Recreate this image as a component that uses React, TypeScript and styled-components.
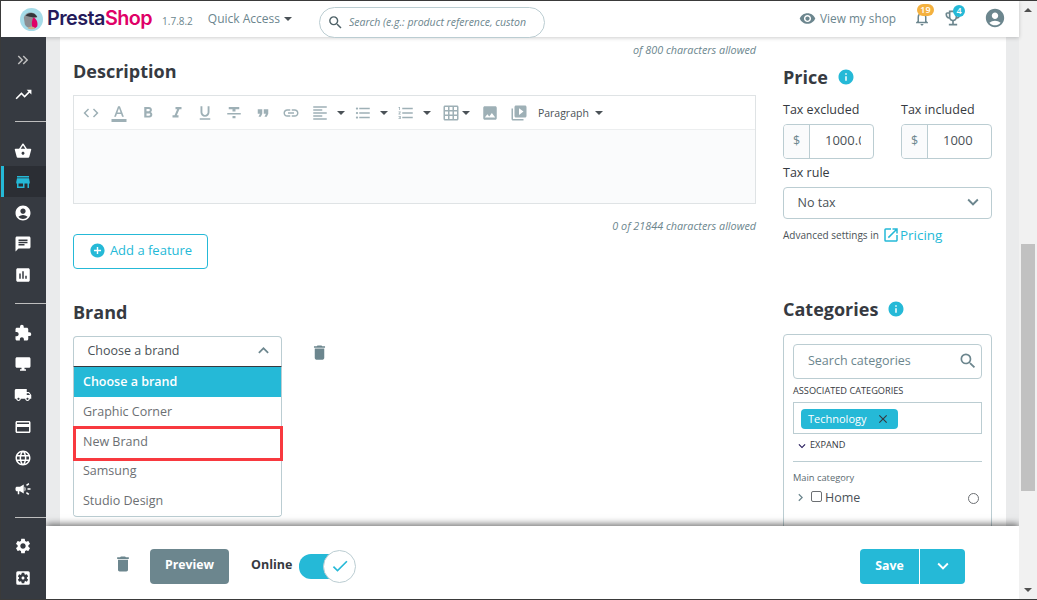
import React from "react";
import styled, { createGlobalStyle } from "styled-components";
import {
  MdKeyboardDoubleArrowRight, MdTrendingUp, MdShoppingBasket, MdStore, MdAccountCircle, MdChat, MdAssessment,
  MdExtension, MdDesktopWindows, MdLocalShipping, MdCreditCard, MdLanguage, MdCampaign, MdSettings, MdSettingsApplications,
  MdVisibility, MdNotificationsNone, MdOutlineEmojiEvents, MdSearch, MdCode, MdFormatColorText, MdFormatBold, MdFormatItalic,
  MdFormatUnderlined, MdFormatStrikethrough, MdFormatQuote, MdLink, MdFormatAlignLeft, MdFormatListBulleted, MdFormatListNumbered,
  MdGridOn, MdImage, MdVideoLibrary, MdAddCircle, MdExpandLess, MdExpandMore, MdDelete, MdInfo, MdOpenInNew, MdClose,
  MdChevronRight, MdCheck, MdKeyboardArrowDown,
} from "react-icons/md";

const Global = createGlobalStyle`
  html, body { margin: 0; padding: 0; height: 100%; overflow: hidden; background: #fff; }
  * { box-sizing: border-box; }
  body { font-family: "Open Sans", "Liberation Sans", sans-serif; color: #363a41; }
`;

const Frame = styled.div`
  width: 1037px; height: 600px; display: flex; overflow: hidden;
  border-top: 1px solid #3a3a3a; border-bottom: 1px solid #3a3a3a; border-left: 1px solid #3a3a3a;
`;
const Page = styled.div`width: 1018px; display: flex; flex-direction: column; min-width: 0;`;
const Header = styled.header`
  position: relative; z-index: 3; height: 36px; flex: none; background: #fff; display: flex; align-items: center;
  padding-left: 19px; box-shadow: 0 1px 4px rgba(0,0,0,.2);
`;
const LogoMark = styled.svg`width: 23px; height: 23px; flex: none;`;
const LogoText = styled.span`font-family: Inter, sans-serif; font-size: 19.8px; font-weight: 600; letter-spacing: -0.55px; margin-left: 4px; color: #251b5b; line-height: 1;`;
const LogoAccent = styled.span`color: #df0067;`;
const Version = styled.span`font-size: 10px; color: #6c868e; margin-left: 10px; margin-top: 3px;`;
const QuickAccess = styled.span`font-size: 12px; color: #6c868e; margin-left: 15px; display: flex; align-items: center; gap: 4px; margin-top: -1px;`;
const Caret = styled.i<{ $gap?: number }>`
  display: block; width: 0; height: 0; flex: none; margin-left: ${(p) => p.$gap ?? 0}px;
  border-left: 4px solid transparent; border-right: 4px solid transparent; border-top: 4px solid #4b5257;
`;
const SearchPill = styled.div`
  width: 226px; height: 31px; margin-left: 27px; margin-top: 6px; border: 1px solid #bbcdd2; border-radius: 16px; display: flex; align-items: center;
  padding: 0 13px 0 7px; gap: 4px; color: #4e6167; overflow: hidden; white-space: nowrap;
`;
const SearchHint = styled.span`font-size: 10.5px; font-style: italic; color: #6c868e; overflow: hidden; margin-left: 1px;`;
const HeaderRight = styled.div`margin-left: auto; display: flex; align-items: center; height: 100%; margin-top: -2px;`;
const ViewShop = styled.span`display: flex; align-items: center; gap: 4px; font-size: 11.8px; color: #6c868e;`;
const Notify = styled.span<{ $left: number }>`position: relative; display: flex; margin-left: ${(p) => p.$left}px; color: #6c868e;`;
const Badge = styled.b<{ $bg: string; $w: number; $x: number; $y: number }>`
  position: absolute; left: ${(p) => p.$x}px; top: ${(p) => p.$y}px; width: ${(p) => p.$w}px; height: 12px; border-radius: 6px; background: ${(p) => p.$bg};
  color: #fff; font-size: 9px; font-weight: 600; line-height: 12px; text-align: center;
`;
const Account = styled.span`display: flex; margin-left: 21px; margin-right: 13px; color: #6c868e;`;

const Body = styled.div`flex: 1; display: flex; min-height: 0; overflow: hidden;`;
const Sidebar = styled.nav`width: 45px; flex: none; background: #363a41; padding-top: 5px; display: flex; flex-direction: column; overflow: hidden; position: relative; z-index: 3;`;
const NavItem = styled.span<{ $active?: boolean; $h?: number; $muted?: boolean }>`
  height: ${(p) => p.$h ?? 31}px; flex: none; display: flex; align-items: center; justify-content: center; padding-right: 4px;
  color: ${(p) => (p.$active ? "#25b9d7" : p.$muted ? "#bebebe" : "#fff")};
  background: ${(p) => (p.$active ? "#2b2e34" : "transparent")};
  border-left: 3px solid ${(p) => (p.$active ? "#25b9d7" : "transparent")};
`;
const NavRule = styled.hr<{ $top: number; $bottom: number }>`
  margin: ${(p) => p.$top}px 0 ${(p) => p.$bottom}px 14px; height: 1px; border: 0; background: #bebebe; flex: none;
`;

const Main = styled.div`flex: 1; display: flex; flex-direction: column; min-width: 0; background: #eaebec;`;
const Scroller = styled.div`flex: 1; min-height: 0; overflow: hidden; padding: 0 13px 0 14px;`;
const Card = styled.main`
  background: #fff; display: grid; grid-template-columns: 683px 209px; column-gap: 27px; padding: 5px 14px 40px 13px; min-height: 600px;
`;
const Column = styled.section`display: flex; flex-direction: column; min-width: 0;`;
const RightColumn = styled(Column)`padding-top: 23px;`;
const Counter = styled.div<{ $top?: number }>`height: 16px; margin-top: ${(p) => p.$top ?? 0}px; text-align: right; font-size: 10.8px; line-height: 16px; font-style: italic; color: #6c868e;`;
const Heading = styled.h2<{ $top?: number; $bottom?: number }>`
  margin: ${(p) => p.$top ?? 0}px 0 ${(p) => p.$bottom ?? 12}px; height: 24px; font-size: 18px; line-height: 24px; font-weight: 700; color: #363a41; display: flex; align-items: center; gap: 9px;
`;
const InfoDot = styled.span`display: flex; color: #25b9d7;`;
const Editor = styled.div`height: 109px; border: 1px solid #dfe3e5; display: flex; flex-direction: column;`;
const Toolbar = styled.div`height: 34px; flex: none; padding-left: 2px; display: flex; align-items: center; border-bottom: 1px solid #eceeef; color: #9eb0b6;`;
const ToolButton = styled.span<{ $w?: number; $pad?: number }>`
  width: ${(p) => p.$w ?? 28.7}px; height: 100%; flex: none; display: flex; align-items: center; padding-left: ${(p) => p.$pad ?? 5.5}px;
`;
const ParagraphPick = styled.span`margin-left: 5px; font-size: 10.5px; color: #4b5257; display: flex; align-items: center; gap: 6px;`;
const EditorBody = styled.div`flex: 1; background: #fafbfc;`;
const AddButton = styled.button`
  width: 135px; height: 35px; flex: none; background: #fff; border: 1px solid #25b9d7; border-radius: 4px; color: #25b9d7; font: 13px "Open Sans", sans-serif;
  display: flex; align-items: center; justify-content: center; gap: 4px; padding: 0 0 3px;
`;
const BrandRow = styled.div`display: flex; align-items: flex-start;`;
const SelectWrap = styled.div`position: relative; width: 209px; flex: none;`;
const SelectBox = styled.div<{ $open?: boolean; $h?: number }>`
  height: ${(p) => p.$h ?? 31}px; background: #fff; border: 1px solid #bbcdd2; border-radius: ${(p) => (p.$open ? "4px 4px 0 0" : "4px")};
  ${(p) => (p.$open ? "border-bottom-color: #363a41;" : "")}
  display: flex; align-items: center; justify-content: space-between; padding: 0 7px 2px 13.5px; font-size: 12.5px; color: #4b5257;
`;
const SelectIcon = styled.span`display: flex; color: #6c868e;`;
const Menu = styled.ul`
  position: absolute; left: 0; right: 0; top: 100%; margin: 0; padding: 0; list-style: none; background: #fff;
  border: 1px solid #bbcdd2; border-top: 0; border-radius: 0 0 4px 4px; height: 150px;
`;
const MenuItem = styled.li<{ $selected?: boolean }>`
  height: ${(p) => (p.$selected ? 30 : 29.5)}px; padding: 0 9px; font-size: 12.5px; line-height: ${(p) => (p.$selected ? 29 : 29.2)}px;
  background: ${(p) => (p.$selected ? "#25b9d7" : "#fff")}; color: ${(p) => (p.$selected ? "#fff" : "#6c6f73")}; font-weight: ${(p) => (p.$selected ? 600 : 400)};
`;
const Highlight = styled.div`position: absolute; left: -1px; top: 59px; width: 210px; height: 35px; border: 3px solid #f8393f; pointer-events: none;`;
const BrandTrash = styled.span`margin: 7px 0 0 28px; display: flex; color: #6c868e;`;

const PriceGrid = styled.div`display: grid; grid-template-columns: 91px 91px; column-gap: 27px;`;
const FieldLabel = styled.label<{ $top?: number }>`display: block; height: 18px; margin: ${(p) => p.$top ?? 0}px 0 6px; font-size: 12.5px; line-height: 19px; color: #363a41;`;
const PriceLabel = styled(FieldLabel)`margin: -1px 0 6px;`;
const PriceInput = styled.div`height: 35px; border: 1px solid #bbcdd2; border-radius: 4px; display: flex; overflow: hidden;`;
const Addon = styled.span`width: 26px; flex: none; background: #fafbfc; border-right: 1px solid #bbcdd2; color: #6c868e; font-size: 12.5px; display: flex; align-items: center; justify-content: center; padding-bottom: 2px;`;
const Amount = styled.span`flex: 1; min-width: 0; overflow: hidden; white-space: nowrap; margin: 0 12px 0 15px; font-size: 13px; line-height: 30px; color: #4b5257;`;
const AdvancedRow = styled.div`margin-top: 7px; height: 18px; display: flex; align-items: center; font-size: 10px; color: #4b5257;`;
const PricingLink = styled.span`display: flex; align-items: center; margin-left: 3px; color: #25b9d7; font-size: 13.5px; font-weight: 500;`;
const CategoryBox = styled.div`border: 1px solid #bbcdd2; border-radius: 4px 4px 0 0; height: 240px; padding: 9px 9px 0 9px; display: flex; flex-direction: column;`;
const CategorySearch = styled.div`height: 35px; flex: none; border: 1px solid #bbcdd2; border-radius: 4px; display: flex; align-items: center; justify-content: space-between; padding: 0 3px 2px 14px; font-size: 12.5px; color: #6c868e;`;
const SmallCaps = styled.div`height: 14px; margin-top: 5px; font-size: 9.2px; line-height: 14px; color: #363a41; font-weight: 500; white-space: nowrap;`;
const TagBox = styled.div`height: 32px; margin-top: 4px; flex: none; border: 1px solid #bbcdd2; padding: 6px 7px;`;
const Tag = styled.span`height: 20px; width: 97px; border-radius: 4px; background: #25b9d7; color: #fff; font-size: 11px; display: flex; align-items: center; justify-content: space-between; padding: 0 8px 1px 7px;`;
const ExpandRow = styled.div`margin-top: 3px; height: 15px; display: flex; align-items: center; font-size: 9.2px; color: #363a41; padding-left: 2px; gap: 1px;`;
const ExpandIcon = styled.span`display: flex; color: #251b5b; margin-top: 2px;`;
const BoxRule = styled.hr`height: 1px; border: 0; background: #bbcdd2; margin: 9px 0 0; flex: none;`;
const MainCat = styled.div`margin-top: 9px; height: 14px; font-size: 9.3px; line-height: 14px; color: #5b6a70;`;
const TreeRow = styled.div`margin-top: 2px; height: 20px; display: flex; align-items: center; font-size: 12.5px; color: #4b5257;`;
const TreeChevron = styled.span`display: flex; color: #6c868e; width: 18px; flex: none;`;
const Check = styled.span`width: 11px; height: 11px; border: 1px solid #6c6f73; border-radius: 2px; flex: none; margin-right: 3px; margin-top: -1px;`;
const Radio = styled.span`width: 11px; height: 11px; border: 1px solid #6c6f73; border-radius: 50%; flex: none; margin-left: auto; margin-right: 3px; margin-top: 2px;`;

const Footer = styled.footer`
  position: relative; z-index: 2; height: 73px; flex: none; background: #fff; box-shadow: 0 -2px 7px rgba(0,0,0,.55); display: flex; align-items: center; padding: 7px 54px 0 67px;
`;
const FooterTrash = styled.span`display: flex; color: #6c868e; margin: 0 17px 5px 0;`;
const PreviewButton = styled.button`
  width: 79px; height: 35px; border: 0; border-radius: 4px; background: #6c868e; color: #fff; font: 700 12.3px "Open Sans", sans-serif; padding: 0 0 4px;
`;
const OnlineLabel = styled.span`margin-left: 22px; font-size: 12.5px; font-weight: 700; color: #363a41; padding-bottom: 4px;`;
const Switch = styled.span`position: relative; width: 57px; height: 33px; margin-left: 7px; display: flex; align-items: center;`;
const Track = styled.span`width: 42px; height: 25px; border-radius: 12px 0 0 12px; background: #25b9d7; display: block;`;
const Knob = styled.span`
  position: absolute; right: 0; top: 0; width: 33px; height: 33px; border-radius: 50%; background: #fff; border: 1px solid #bbcdd2; color: #25b9d7;
  display: flex; align-items: center; justify-content: center;
`;
const SaveGroup = styled.div`margin-left: auto; display: flex; gap: 1px;`;
const SaveButton = styled.button`
  width: 59px; height: 35px; border: 0; border-radius: 4px 0 0 4px; background: #25b9d7; color: #fff; font: 700 12.3px "Open Sans", sans-serif; padding: 0 0 2px;
`;
const SaveMore = styled.button`width: 45px; height: 35px; border: 0; border-radius: 0 4px 4px 0; background: #25b9d7; color: #fff; padding: 0; display: flex; align-items: center; justify-content: center;`;

const ScrollRail = styled.div`width: 18px; flex: none; background: #f1f1f1; display: flex; flex-direction: column; align-items: center; padding-top: 7px;`;
const ArrowUp = styled.i`display: block; width: 0; height: 0; border-left: 4px solid transparent; border-right: 4px solid transparent; border-bottom: 4px solid #505050; flex: none;`;
const ArrowDown = styled.i`display: block; width: 0; height: 0; border-left: 4px solid transparent; border-right: 4px solid transparent; border-top: 4px solid #505050; margin-top: auto; margin-bottom: 7px; flex: none;`;
const Thumb = styled.div`width: 14px; height: 247px; margin-top: 232px; background: #c1c1c1; flex: none;`;

const Logo = () => (
  <LogoMark viewBox="0 0 24 24" aria-hidden="true">
    <circle cx="12" cy="12" r="12" fill="#a5dbe8" />
    <path d="M4 10c1-4 5-6 9-5 3 .7 5 3 5 5l-3 1c-1 0-2 1-2 3l-1 7c-3 0-6-1-7-4z" fill="#8c8f93" />
    <path d="M6 8c2-3 6-3.500 9-2l3 3-4 1c-3-1-5-1-8-2z" fill="#33353b" />
    <path d="M14 10c3 1 5 5 4 9-1 1.500-3 2.500-5 2-1-4-1-8 1-11z" fill="#df0067" />
    <path d="M8 21c2-2 6-2 8 0-2 1.500-6 1.500-8 0z" fill="#c9b08f" />
  </LogoMark>
);

const group1 = [MdTrendingUp];
const group2 = [MdShoppingBasket, MdStore, MdAccountCircle, MdChat, MdAssessment];
const group3 = [MdExtension, MdDesktopWindows, MdLocalShipping, MdCreditCard, MdLanguage, MdCampaign];
const group4 = [MdSettings, MdSettingsApplications];
const tools = [MdCode, MdFormatColorText, MdFormatBold, MdFormatItalic, MdFormatUnderlined, MdFormatStrikethrough, MdFormatQuote, MdLink];
const listTools = [MdFormatAlignLeft, MdFormatListBulleted, MdFormatListNumbered];
const brands = ["Graphic Corner", "New Brand", "Samsung", "Studio Design"];

export default function App() {
  return (
    <>
      <Global />
      <Frame>
        <Page>
          <Header>
            <Logo />
            <LogoText>Presta<LogoAccent>Shop</LogoAccent></LogoText>
            <Version>1.7.8.2</Version>
            <QuickAccess>Quick Access <Caret /></QuickAccess>
            <SearchPill><MdSearch size={17} /><SearchHint>Search (e.g.: product reference, custon</SearchHint></SearchPill>
            <HeaderRight>
              <ViewShop><MdVisibility size={17} />View my shop</ViewShop>
              <Notify $left={17}><MdNotificationsNone size={18} /><Badge $bg="#f4b13f" $w={17} $x={4} $y={-5}>19</Badge></Notify>
              <Notify $left={12}><MdOutlineEmojiEvents size={20} /><Badge $bg="#25b9d7" $w={12} $x={10} $y={-3}>4</Badge></Notify>
              <Account><MdAccountCircle size={22} /></Account>
            </HeaderRight>
          </Header>
          <Body>
            <Sidebar>
              <NavItem $h={35} $muted><MdKeyboardDoubleArrowRight size={18} /></NavItem>
              {group1.map((I, i) => <NavItem key={i} $h={35}><I size={19} /></NavItem>)}
              <NavRule $top={9} $bottom={13} />
              {group2.map((I, i) => <NavItem key={i} $active={i === 1}><I size={18} /></NavItem>)}
              <NavRule $top={13} $bottom={13} />
              {group3.map((I, i) => <NavItem key={i} $h={31.3}><I size={18} /></NavItem>)}
              <NavRule $top={12} $bottom={12} />
              {group4.map((I, i) => <NavItem key={i} $h={32}><I size={18} /></NavItem>)}
            </Sidebar>
            <Main>
              <Scroller>
                <Card>
                  <Column>
                    <Counter>of 800 characters allowed</Counter>
                    <Heading $top={1}>Description</Heading>
                    <Editor>
                      <Toolbar>
                        {tools.map((I, i) => <ToolButton key={i}><I size={18} /></ToolButton>)}
                        {listTools.map((I, i) => <ToolButton key={i} $w={43}><I size={18} /><Caret $gap={8} /></ToolButton>)}
                        <ToolButton $w={41} $pad={7}><MdGridOn size={18} /><Caret $gap={2} /></ToolButton>
                        <ToolButton><MdImage size={18} /></ToolButton>
                        <ToolButton><MdVideoLibrary size={18} /></ToolButton>
                        <ParagraphPick>Paragraph <Caret /></ParagraphPick>
                      </Toolbar>
                      <EditorBody />
                    </Editor>
                    <Counter $top={14}>0 of 21844 characters allowed</Counter>
                    <AddButton><MdAddCircle size={17} />Add a feature</AddButton>
                    <Heading $top={31}>Brand</Heading>
                    <BrandRow>
                      <SelectWrap>
                        <SelectBox $open>Choose a brand<SelectIcon><MdExpandLess size={21} /></SelectIcon></SelectBox>
                        <Menu>
                          <MenuItem $selected>Choose a brand</MenuItem>
                          {brands.map((b) => <MenuItem key={b}>{b}</MenuItem>)}
                          <Highlight />
                        </Menu>
                      </SelectWrap>
                      <BrandTrash><MdDelete size={19} /></BrandTrash>
                    </BrandRow>
                  </Column>
                  <RightColumn>
                    <Heading>Price <InfoDot><MdInfo size={18} /></InfoDot></Heading>
                    <PriceGrid>
                      <div>
                        <PriceLabel>Tax excluded</PriceLabel>
                        <PriceInput><Addon>$</Addon><Amount>1000.0</Amount></PriceInput>
                      </div>
                      <div>
                        <PriceLabel>Tax included</PriceLabel>
                        <PriceInput><Addon>$</Addon><Amount>1000</Amount></PriceInput>
                      </div>
                    </PriceGrid>
                    <FieldLabel $top={4}>Tax rule</FieldLabel>
                    <SelectBox $h={32}>No tax<SelectIcon><MdExpandMore size={22} /></SelectIcon></SelectBox>
                    <AdvancedRow>Advanced settings in<PricingLink><MdOpenInNew size={18} />Pricing</PricingLink></AdvancedRow>
                    <Heading $top={53} $bottom={13}>Categories <InfoDot><MdInfo size={18} /></InfoDot></Heading>
                    <CategoryBox>
                      <CategorySearch>Search categories<SelectIcon><MdSearch size={20} /></SelectIcon></CategorySearch>
                      <SmallCaps>ASSOCIATED CATEGORIES</SmallCaps>
                      <TagBox><Tag>Technology<MdClose size={14} color="#363a41" /></Tag></TagBox>
                      <ExpandRow><ExpandIcon><MdKeyboardArrowDown size={14} /></ExpandIcon>EXPAND</ExpandRow>
                      <BoxRule />
                      <MainCat>Main category</MainCat>
                      <TreeRow>
                        <TreeChevron><MdChevronRight size={15} /></TreeChevron>
                        <Check />Home<Radio />
                      </TreeRow>
                    </CategoryBox>
                  </RightColumn>
                </Card>
              </Scroller>
              <Footer>
                <FooterTrash><MdDelete size={20} /></FooterTrash>
                <PreviewButton>Preview</PreviewButton>
                <OnlineLabel>Online</OnlineLabel>
                <Switch><Track /><Knob><MdCheck size={20} /></Knob></Switch>
                <SaveGroup>
                  <SaveButton>Save</SaveButton>
                  <SaveMore><MdKeyboardArrowDown size={22} /></SaveMore>
                </SaveGroup>
              </Footer>
            </Main>
          </Body>
        </Page>
        <ScrollRail>
          <ArrowUp />
          <Thumb />
          <ArrowDown />
        </ScrollRail>
      </Frame>
    </>
  );
}
